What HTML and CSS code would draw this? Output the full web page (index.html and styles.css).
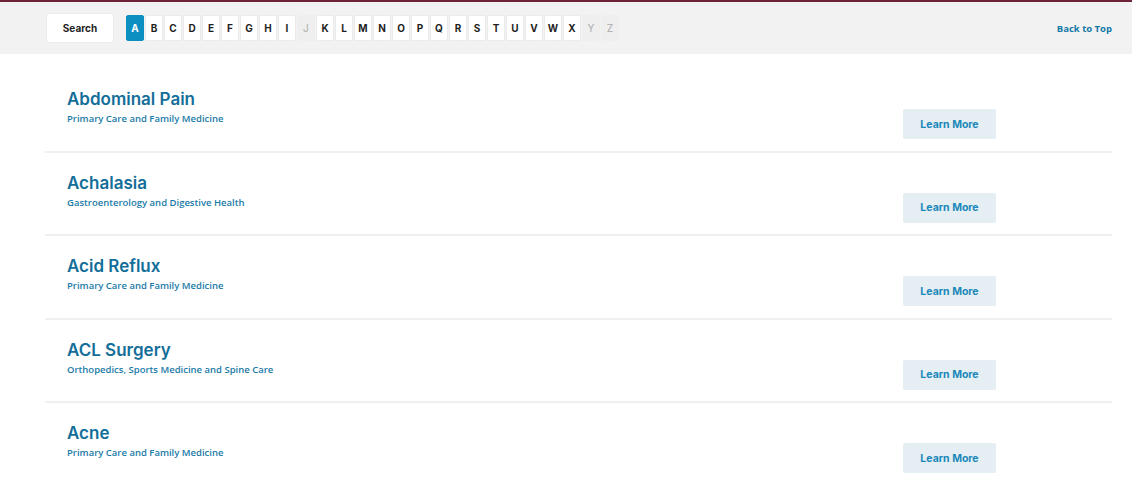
FILE: index.html
```html
<!DOCTYPE html>
<html>
<head>
<meta charset="utf-8">
<link rel="stylesheet" href="styles.css">
</head>
<body>
<header class="bar">
  <div class="bar-left">
    <button class="search">Search</button>
    <nav class="letters">
      <a class="letter active">A</a><a class="letter">B</a><a class="letter">C</a><a class="letter">D</a><a class="letter">E</a><a class="letter">F</a><a class="letter">G</a><a class="letter">H</a><a class="letter">I</a><a class="letter off">J</a><a class="letter">K</a><a class="letter">L</a><a class="letter">M</a><a class="letter">N</a><a class="letter">O</a><a class="letter">P</a><a class="letter">Q</a><a class="letter">R</a><a class="letter">S</a><a class="letter">T</a><a class="letter">U</a><a class="letter">V</a><a class="letter">W</a><a class="letter">X</a><a class="letter off">Y</a><a class="letter off">Z</a>
    </nav>
  </div>
  <a class="top-link">Back to Top</a>
</header>
<main class="list">
  <div class="row">
    <div class="info"><h2 class="title">Abdominal Pain</h2><p class="dept">Primary Care and Family Medicine</p></div>
    <a class="more">Learn More</a>
  </div>
  <div class="row">
    <div class="info"><h2 class="title">Achalasia</h2><p class="dept">Gastroenterology and Digestive Health</p></div>
    <a class="more">Learn More</a>
  </div>
  <div class="row">
    <div class="info"><h2 class="title">Acid Reflux</h2><p class="dept">Primary Care and Family Medicine</p></div>
    <a class="more">Learn More</a>
  </div>
  <div class="row">
    <div class="info"><h2 class="title">ACL Surgery</h2><p class="dept">Orthopedics, Sports Medicine and Spine Care</p></div>
    <a class="more">Learn More</a>
  </div>
  <div class="row">
    <div class="info"><h2 class="title">Acne</h2><p class="dept">Primary Care and Family Medicine</p></div>
    <a class="more">Learn More</a>
  </div>
</main>
</body>
</html>
```
FILE: styles.css
```css
* { box-sizing: border-box; }
html, body { margin: 0; padding: 0; background: #fff; }
body { font-family: "Open Sans", "Liberation Sans", sans-serif; }

.bar {
  height: 54px;
  background: #f2f2f2;
  border-top: 2px solid #6e2238;
  margin: 0 2px 0 0;
  display: flex;
  align-items: center;
  justify-content: space-between;
  padding: 0 20px 0 46px;
}
.bar-left { display: flex; align-items: center; gap: 12px; }
.search {
  width: 68px; height: 30px;
  background: #fff;
  border: 1px solid #ececec;
  border-radius: 2px;
  font-family: "Inter", "Liberation Sans", sans-serif;
  font-weight: 700;
  font-size: 10px;
  color: #222;
  padding: 0;
}
.letters { display: flex; gap: 1px; }
.letter {
  width: 18px; height: 26px;
  display: flex; align-items: center; justify-content: center;
  background: #fff;
  border: 1px solid #ebebeb;
  border-radius: 2px;
  font-family: "Inter", "Liberation Sans", sans-serif;
  font-weight: 700;
  font-size: 10px;
  color: #1f1f1f;
}
.letter.active { background: #0e8fc2; border-color: #0e8fc2; color: #fff; }
.letter.off { background: #efefef; border-color: #efefef; color: #b5b5b5; font-weight: 500; }
.top-link {
  font-weight: 700;
  font-size: 9.5px;
  color: #1479a8;
}

.list { margin: 0 22px 0 45px; padding-top: 15px; }
.row {
  height: 83.5px;
  border-bottom: 2px solid #f0f0f0;
  display: flex;
  align-items: flex-start;
  justify-content: space-between;
  padding: 19px 116px 0 22px;
}
.row:last-child { border-bottom: 0; }
.title {
  margin: 0;
  font-family: "Inter", "Liberation Sans", sans-serif;
  font-weight: 600;
  font-size: 17px;
  line-height: 22px;
  color: #136e99;
}
.dept {
  margin: 0;
  font-weight: 600;
  font-size: 9.5px;
  line-height: 17px;
  color: #1b7ba8;
}
.more {
  margin-top: 21px;
  width: 93px; height: 30px;
  display: flex; align-items: center; justify-content: center;
  background: #e5eef2;
  border-radius: 2px;
  font-family: "Inter", "Liberation Sans", sans-serif;
  font-weight: 700;
  font-size: 10.5px;
  color: #1a88ba;
}
```
